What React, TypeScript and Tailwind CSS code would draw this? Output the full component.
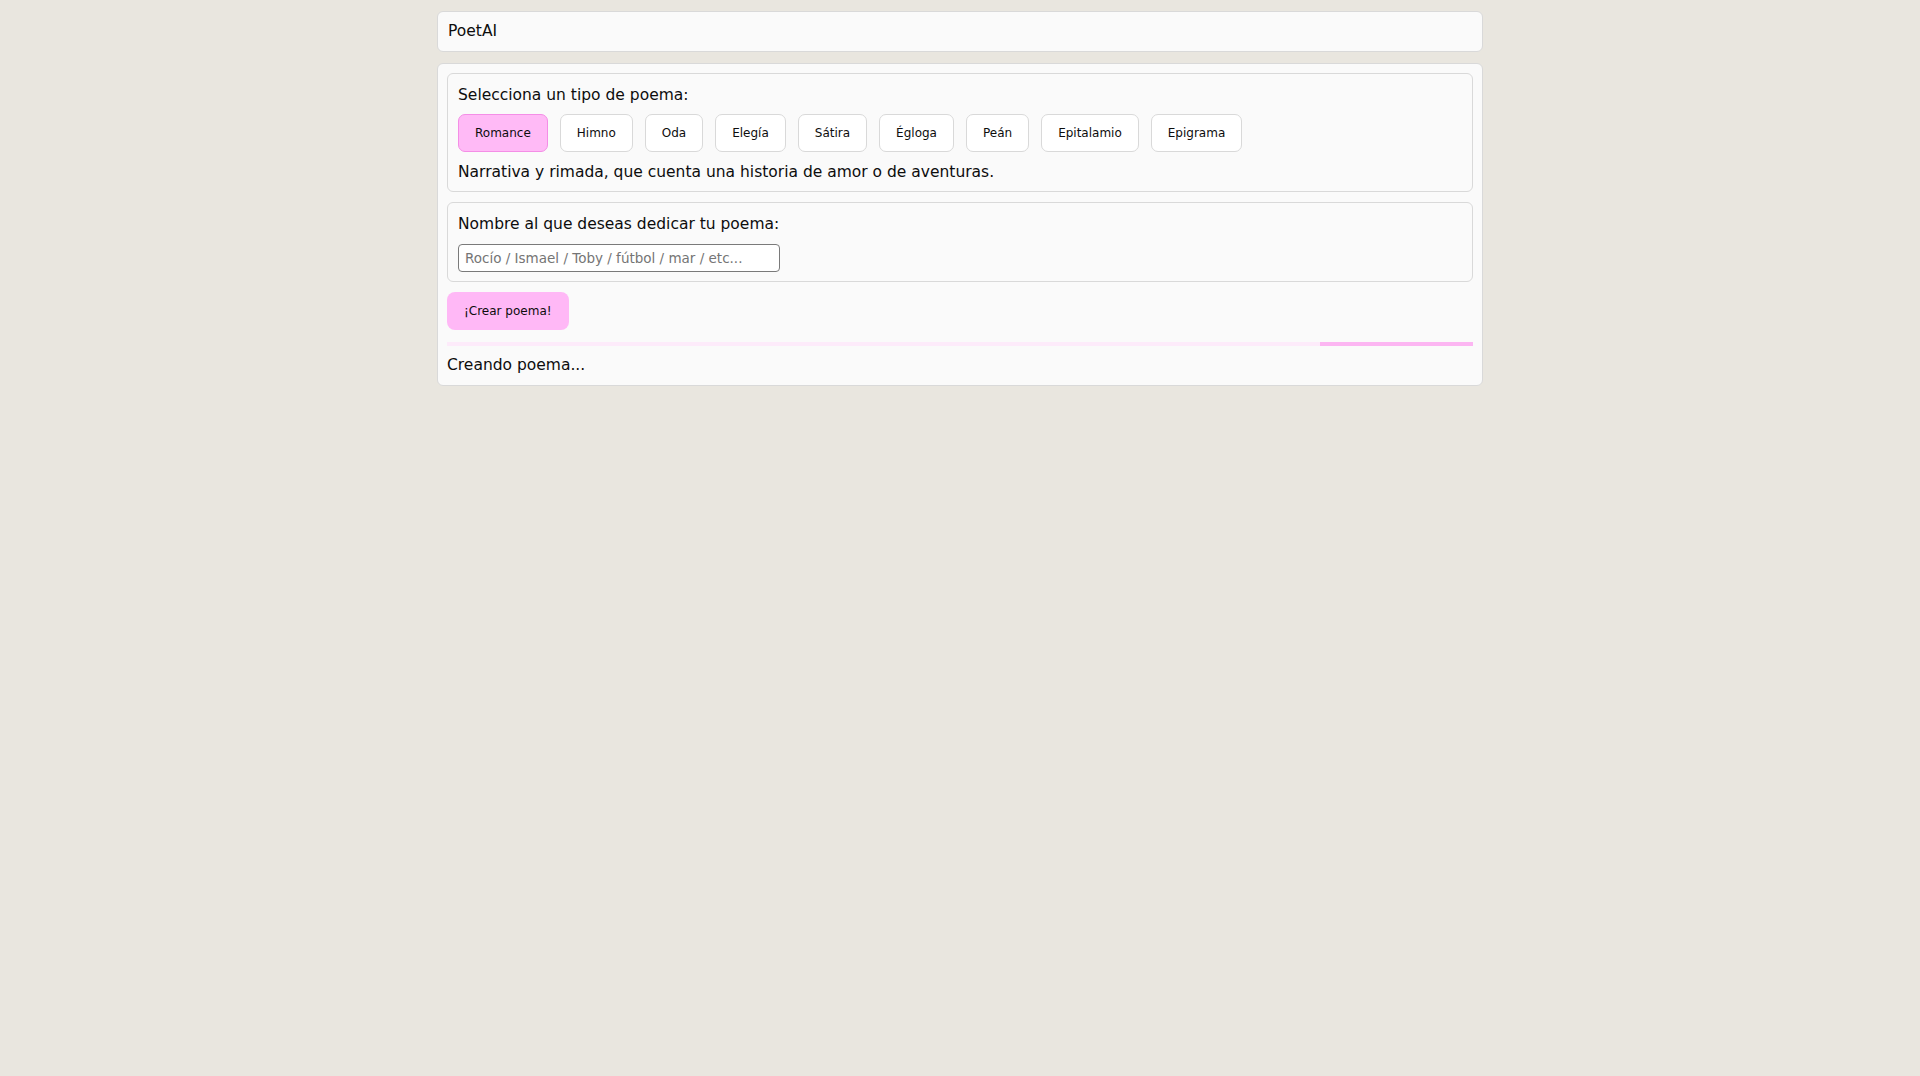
import { useState } from "react";

const tipos = [
  { name: "Romance", desc: "Narrativa y rimada, que cuenta una historia de amor o de aventuras." },
  { name: "Himno", desc: "Composición solemne en alabanza de una persona, una patria o una divinidad." },
  { name: "Oda", desc: "Poema lírico que exalta a una persona o cosa con tono elevado." },
  { name: "Elegía", desc: "Lamento por la muerte de alguien o por una pérdida." },
  { name: "Sátira", desc: "Poema que ridiculiza vicios o defectos con humor e ironía." },
  { name: "Égloga", desc: "Poema pastoril en el que dialogan pastores sobre el amor." },
  { name: "Peán", desc: "Canto de júbilo o de victoria." },
  { name: "Epitalamio", desc: "Poema escrito para celebrar una boda." },
  { name: "Epigrama", desc: "Composición breve e ingeniosa, a menudo satírica." },
];

export default function App() {
  const [selected, setSelected] = useState("Romance");
  const current = tipos.find((t) => t.name === selected);

  return (
    <div
      className="min-h-screen bg-[#e9e6df] pt-[11px] text-[#0d0d0d]"
      style={{ fontFamily: '"DejaVu Sans", sans-serif' }}
    >
      <div className="w-[1046px] mx-auto flex flex-col gap-[11px]">
        {/* Header */}
        <header className="h-[41px] flex items-center px-[10px] bg-[#fafafa] border border-[#d9d9d9] rounded-[6px] text-[15.5px]">
          PoetAI
        </header>

        {/* Main card */}
        <main className="bg-[#fafafa] border border-[#d9d9d9] rounded-[6px] p-[9px] flex flex-col">
          <section className="border border-[#d9d9d9] rounded-[6px] px-[10px] pt-[10px] pb-[8px] flex flex-col">
            <p className="text-[15.5px] leading-[22px]">Selecciona un tipo de poema:</p>
            <div className="flex gap-[12px] mt-[8px]">
              {tipos.map((t) => (
                <button
                  key={t.name}
                  onClick={() => setSelected(t.name)}
                  className={
                    t.name === selected
                      ? "h-[38px] px-4 text-[12px] rounded-[7px] border border-[#f48ee6] bg-[#ffbaf6]"
                      : "h-[38px] px-4 text-[12px] rounded-[7px] border border-[#d9d9d9] bg-white"
                  }
                >
                  {t.name}
                </button>
              ))}
            </div>
            <p className="text-[15.5px] leading-[22px] mt-[9px]">{current?.desc}</p>
          </section>

          <section className="mt-[10px] border border-[#d9d9d9] rounded-[6px] px-[10px] pt-[10px] pb-[9px] flex flex-col">
            <label className="text-[15.5px] leading-[22px]">Nombre al que deseas dedicar tu poema:</label>
            <input
              placeholder="Rocío / Ismael / Toby / fútbol / mar / etc..."
              className="mt-[9px] w-[322px] h-[28px] px-[6px] text-[13.5px] border border-[#7a7a7a] rounded-[4px] bg-white outline-none placeholder:text-[#757575]"
            />
          </section>

          <button className="mt-[10px] self-start px-[17px] h-[38px] rounded-[8px] bg-[#ffb8f6] text-[12px]">
            ¡Crear poema!
          </button>

          <div className="mt-[12px] h-[4px] bg-[#fdebfa] flex justify-end">
            <div className="w-[153px] h-full bg-[#fcb6f2]" />
          </div>

          <p className="mt-[8px] text-[15.5px] leading-[22px]">Creando poema...</p>
        </main>
      </div>
    </div>
  );
}
